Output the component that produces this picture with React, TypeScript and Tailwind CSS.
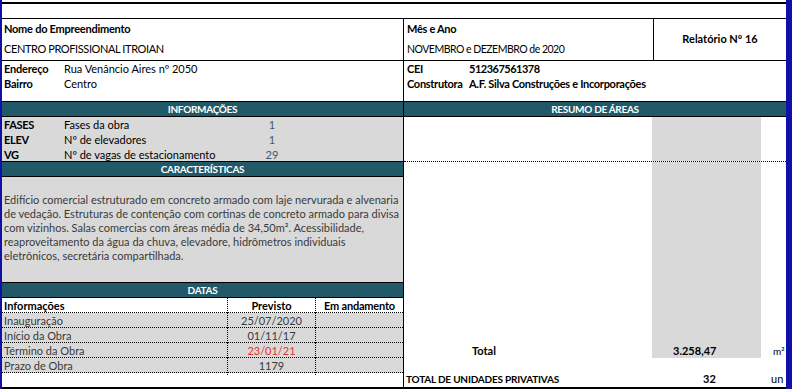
import React from 'react';

const font = { fontFamily: 'Lato, "Liberation Sans", sans-serif' };

const infoRows = [
  { code: 'FASES', label: 'Fases da obra', value: '1' },
  { code: 'ELEV', label: 'Nº de elevadores', value: '1' },
  { code: 'VG', label: 'Nº de vagas de estacionamento', value: '29' },
];

const descLines = [
  'Edifício comercial estruturado em concreto armado com laje nervurada e alvenaria',
  'de vedação. Estruturas de contenção com cortinas de concreto armado para divisa',
  'com vizinhos. Salas comercias com áreas média de 34,50m². Acessibilidade,',
  'reaproveitamento da água da chuva, elevadore, hidrômetros individuais',
  'eletrônicos, secretária compartilhada.',
];

const dateRows = [
  { label: 'Inauguração', prev: '25/07/2020', red: false },
  { label: 'Início da Obra', prev: '01/11/17', red: false },
  { label: 'Término da Obra', prev: '23/01/21', red: true },
  { label: 'Prazo de Obra', prev: '1179', red: false },
];

const SectionHeader: React.FC<{ title: string; top?: boolean }> = ({ title, top }) => (
  <div
    className={`flex items-center justify-center bg-[#215968] text-white font-bold text-[10px] tracking-[-0.3px] border-b border-black ${
      top ? 'h-[16px] border-t' : 'h-[15px]'
    }`}
  >
    {title}
  </div>
);

const App: React.FC = () => {
  return (
    <div className="flex w-[792px] h-[389px] bg-white text-black text-[11px] overflow-hidden" style={font}>
      <div className="w-[2px] bg-[#1010a8]" />
      <div className="flex-1 flex flex-col">
        <div className="h-[2px]" />
        <div className="h-[2px] bg-black" />
        <div className="h-[14px]" />

        {/* Nome / Mês e Ano / Relatório */}
        <div className="flex h-[43px] border-y border-black">
          <div className="w-[402px] border-r border-black flex flex-col pl-[2px]">
            <div className="h-[20px] flex items-center font-bold tracking-[-0.25px]">Nome do Empreendimento</div>
            <div className="h-[21px] flex items-center tracking-[-0.4px]">CENTRO PROFISSIONAL ITROIAN</div>
          </div>
          <div className="w-[250px] border-r border-black flex flex-col pl-[3px]">
            <div className="h-[20px] flex items-center font-bold tracking-[-0.3px]">Mês e Ano</div>
            <div className="h-[21px] flex items-center text-[10.5px] tracking-[-0.5px]">NOVEMBRO e DEZEMBRO de 2020</div>
          </div>
          <div className="flex-1 flex items-center justify-center font-bold">Relatório Nº 16</div>
        </div>

        {/* Endereço / CEI */}
        <div className="flex h-[41px] border-b border-black">
          <div className="w-[402px] border-r border-black pt-[1px] pl-[2px]">
            <div className="h-[15px] flex items-center">
              <span className="w-[60px] shrink-0 font-bold tracking-[-0.2px]">Endereço</span>
              <span>Rua Venâncio Aires nº 2050</span>
            </div>
            <div className="h-[15px] flex items-center">
              <span className="w-[60px] shrink-0 font-bold tracking-[-0.2px]">Bairro</span>
              <span>Centro</span>
            </div>
          </div>
          <div className="flex-1 pt-[1px] pl-[3px] font-bold tracking-[-0.3px]">
            <div className="h-[15px] flex items-center">
              <span className="w-[62px] shrink-0">CEI</span>
              <span className="tracking-[-0.5px]">512367561378</span>
            </div>
            <div className="h-[15px] flex items-center">
              <span className="w-[62px] shrink-0">Construtora</span>
              <span>A.F. Silva Construções e Incorporações</span>
            </div>
          </div>
        </div>

        <div className="flex flex-1">
          {/* Left column */}
          <div className="w-[402px] border-r border-black flex flex-col">
            <SectionHeader title="INFORMAÇÕES" />
            <div className="h-[44px] bg-[#d9d9d9]">
              {infoRows.map((r) => (
                <div key={r.code} className="grid grid-cols-[62px_164px_88px] h-[15px] items-center last:h-[14px]">
                  <span className="pl-[2px] font-bold tracking-[-0.3px]">{r.code}</span>
                  <span>{r.label}</span>
                  <span className="text-center text-[#3e5870]">{r.value}</span>
                </div>
              ))}
            </div>
            <SectionHeader title="CARACTERÍSTICAS" top />
            <div className="h-[106px] bg-[#d9d9d9] border-b border-black pt-[16px] pl-[2px] text-[#3a3a3a] leading-[14px]">
              {descLines.map((l) => (
                <div key={l} className="whitespace-nowrap">
                  {l}
                </div>
              ))}
            </div>
            <SectionHeader title="DATAS" />
            <div className="grid grid-cols-[226px_88px_1fr] h-[15px] border-b border-dotted border-black items-center font-bold">
              <span className="pl-[2px] h-full flex items-center border-r border-dotted border-black">Informações</span>
              <span className="h-full flex items-center justify-center border-r border-dotted border-black">Previsto</span>
              <span className="text-center tracking-[-0.2px]">Em andamento</span>
            </div>
            {dateRows.map((r) => (
              <div
                key={r.label}
                className="grid grid-cols-[226px_88px_1fr] h-[15px] bg-[#d9d9d9] border-b border-dotted border-black items-center text-[#3a3a3a]"
              >
                <span className="pl-[2px] h-full flex items-center border-r border-dotted border-black">{r.label}</span>
                <span
                  className={`h-full flex items-center justify-center border-r border-dotted border-black ${
                    r.red ? 'text-[#e8302e]' : ''
                  }`}
                >
                  {r.prev}
                </span>
                <span />
              </div>
            ))}
            <div className="h-[14px]" />
          </div>

          {/* Right column */}
          <div className="flex-1 flex flex-col">
            <SectionHeader title="RESUMO DE ÁREAS" />
            <div className="grid grid-cols-[248px_109px_25px] h-[45px] border-b border-dotted border-black">
              <div />
              <div className="bg-[#d9d9d9]" />
              <div />
            </div>
            <div className="grid grid-cols-[248px_109px_25px] h-[196px]">
              <div className="flex flex-col justify-end">
                <div className="h-[14px] flex items-center pl-[68px] font-bold">Total</div>
              </div>
              <div className="bg-[#d9d9d9] flex flex-col justify-end">
                <div className="h-[14px] flex items-center pl-[21px] font-bold">3.258,47</div>
              </div>
              <div className="flex flex-col justify-end">
                <div className="h-[14px] flex items-center pl-[12px] text-[10px]">m²</div>
              </div>
            </div>
            <div className="grid grid-cols-[248px_109px_25px] flex-1 items-end">
              <div className="h-[15px] flex items-center pl-[2px] font-bold text-[10px] tracking-[-0.2px]">
                TOTAL DE UNIDADES PRIVATIVAS
              </div>
              <div className="h-[15px] flex items-center pl-[51px] font-bold">32</div>
              <div className="h-[15px] flex items-center pl-[10px]">un</div>
            </div>
          </div>
        </div>
        <div className="h-[2px] bg-black" />
      </div>
      <div className="w-[6px] bg-[#1010a8]" />
    </div>
  );
};

export default App;
